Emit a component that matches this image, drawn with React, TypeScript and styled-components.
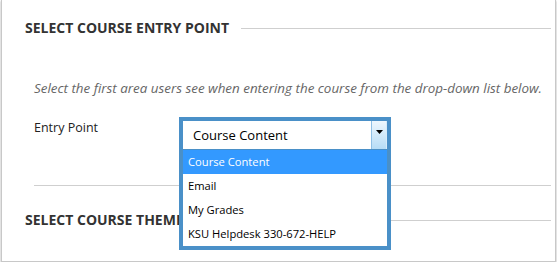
import React from "react";
import styled, { createGlobalStyle } from "styled-components";

const GlobalStyle = createGlobalStyle`
  html, body { margin: 0; padding: 0; background: #ffffff; }
  body { font-family: "Open Sans", "DejaVu Sans", sans-serif; }
  * { box-sizing: border-box; }
`;

const Card = styled.div`
  margin-left: 1px;
  width: 555px;
  height: 262px;
  background: #fff;
  border: 1px solid #c8c8c8;
  border-top: none;
  box-shadow: 0 1px 2px rgba(0, 0, 0, 0.35);
  padding: 18px 4px 0 23px;
  overflow: visible;
`;

const SectionHeading = styled.div<{ $top?: number }>`
  display: flex;
  align-items: center;
  gap: 12px;
  margin-top: ${(p) => p.$top ?? 0}px;
  height: 20px;
`;

const HeadingText = styled.h2`
  margin: 0;
  font-family: "Open Sans", sans-serif;
  font-weight: 700;
  font-size: 14px;
  line-height: 20px;
  color: #333;
  white-space: nowrap;
`;

const Rule = styled.div`
  flex: 1;
  height: 1px;
  background: #cfcfcf;
`;

const Body = styled.div`
  padding-left: 9px;
`;

const Hint = styled.p`
  margin: 41px 0 0 0;
  font-family: "Open Sans", sans-serif;
  font-style: italic;
  font-size: 13.4px;
  line-height: 18px;
  color: #666;
  white-space: nowrap;
`;

const FieldRow = styled.div`
  display: flex;
  align-items: flex-start;
  margin-top: 20px;
`;

const Label = styled.div`
  width: 145px;
  margin-top: 2px;
  font-family: "Open Sans", sans-serif;
  font-size: 12.5px;
  line-height: 18px;
  color: #222;
`;

const SelectWrap = styled.div`
  position: relative;
  width: 212px;
  height: 36px;
`;

const Frame = styled.div`
  position: absolute;
  top: 0;
  left: 0;
  width: 212px;
  border: 4px solid #4a90c8;
  background: #fff;
  z-index: 2;
`;

const Face = styled.div`
  display: flex;
  height: 29px;
  border-bottom: 1px solid #4a90c8;
`;

const FaceText = styled.div`
  flex: 1;
  padding-left: 10px;
  font-family: "Open Sans", sans-serif;
  font-size: 13px;
  line-height: 28px;
  color: #000;
`;

const ArrowButton = styled.div`
  width: 16px;
  display: flex;
  justify-content: center;
  padding-top: 9px;
  background: linear-gradient(#eef7fe, #b6dcf6);
  border-left: 1px solid #8fc0e6;
  border-right: 1px solid #d6ebfa;
`;

const List = styled.div`
  display: flex;
  flex-direction: column;
`;

const Item = styled.div<{ $active?: boolean }>`
  height: 24px;
  padding-left: 5px;
  font-family: "Open Sans", sans-serif;
  font-size: 11.2px;
  line-height: 24px;
  color: ${(p) => (p.$active ? "#fff" : "#000")};
  background: ${(p) => (p.$active ? "#3399ff" : "#fff")};
  white-space: nowrap;
`;

const Separator = styled.div`
  height: 1px;
  background: #cfcfcf;
  margin-top: 32px;
`;

const options = ["Course Content", "Email", "My Grades", "KSU Helpdesk 330-672-HELP"];

export default function App() {
  return (
    <>
      <GlobalStyle />
      <Card>
        <SectionHeading>
          <HeadingText>SELECT COURSE ENTRY POINT</HeadingText>
          <Rule />
        </SectionHeading>
        <Body>
          <Hint>
            Select the first area users see when entering the course from the drop-down list below.
          </Hint>
          <FieldRow>
            <Label>Entry Point</Label>
            <SelectWrap>
              <Frame>
                <Face>
                  <FaceText>Course Content</FaceText>
                  <ArrowButton>
                    <svg width="7" height="4" viewBox="0 0 7 4">
                      <path d="M0 0H7L3.5 4Z" fill="#000" />
                    </svg>
                  </ArrowButton>
                </Face>
                <List>
                  {options.map((o, i) => (
                    <Item key={o} $active={i === 0}>
                      {o}
                    </Item>
                  ))}
                </List>
              </Frame>
            </SelectWrap>
          </FieldRow>
          <Separator />
        </Body>
        <SectionHeading $top={24}>
          <HeadingText>SELECT COURSE THEME</HeadingText>
          <Rule />
        </SectionHeading>
      </Card>
    </>
  );
}
